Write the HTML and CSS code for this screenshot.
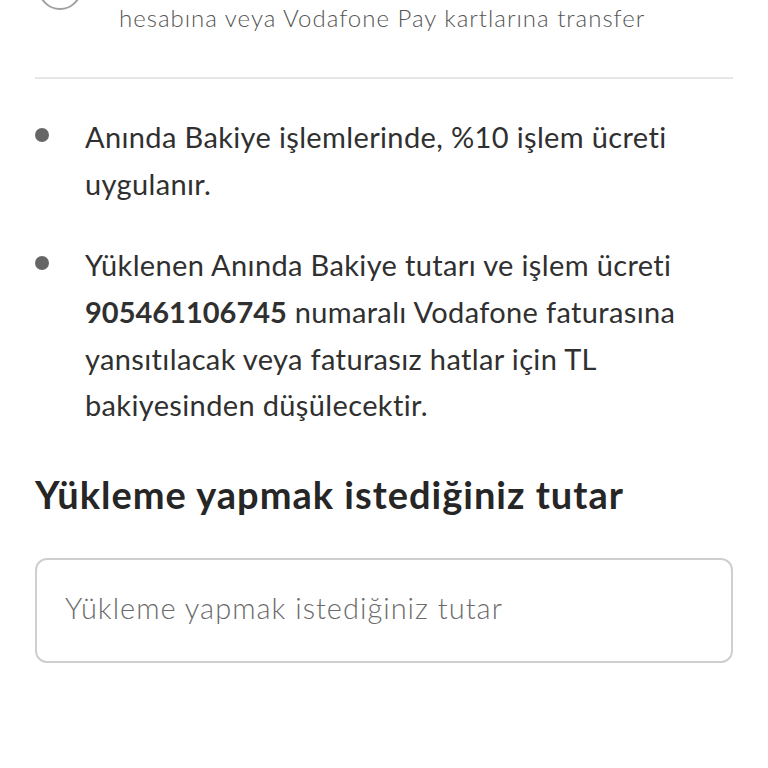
FILE: index.html
```html
<!DOCTYPE html>
<html lang="tr">
<head>
<meta charset="utf-8">
<link rel="stylesheet" href="styles.css">
</head>
<body>
<div class="page">
  <div class="option">
    <span class="radio"></span>
    <p class="option-line">hesabına veya Vodafone Pay kartlarına transfer</p>
  </div>
  <hr class="divider">
  <ul class="notes">
    <li class="note">Anında Bakiye işlemlerinde, %10 işlem ücreti uygulanır.</li>
    <li class="note">Yüklenen Anında Bakiye tutarı ve işlem ücreti <b class="num">905461106745</b> numaralı Vodafone faturasına yansıtılacak veya faturasız hatlar için TL bakiyesinden düşülecektir.</li>
  </ul>
  <h2 class="title">Yükleme yapmak istediğiniz tutar</h2>
  <div class="field">
    <input class="amount" type="text" placeholder="Yükleme yapmak istediğiniz tutar">
  </div>
</div>
</body>
</html>
```
FILE: styles.css
```css
html, body {
  margin: 0;
  padding: 0;
  background: #fff;
}
body {
  font-family: "Lato", "Open Sans", sans-serif;
  color: #303030;
  overflow: hidden;
  height: 768px;
}
.page {
  padding: 0 35px;
}
.option {
  display: flex;
  align-items: flex-start;
  gap: 37px;
}
.radio {
  flex: none;
  width: 44px;
  height: 44px;
  margin-left: 3px;
  margin-top: -34px;
  border: 2px solid #a0a0a0;
  border-radius: 50%;
  box-sizing: border-box;
}
.option-line {
  margin: 0;
  font-size: 24px;
  line-height: 36px;
  color: #555;
  font-weight: 300;
  letter-spacing: 1px;
}
.divider {
  border: 0;
  border-top: 2px solid #e6e6e6;
  margin: 41px 0 0 0;
}
.notes {
  list-style: none;
  margin: 35px 0 0 0;
  padding: 0;
}
.note {
  position: relative;
  padding-left: 50px;
  padding-right: 30px;
  font-size: 29px;
  line-height: 46.67px;
  letter-spacing: 0.36px;
  margin-bottom: 35px;
}
.note:last-child {
  margin-bottom: 0;
}
.note::before {
  content: "";
  position: absolute;
  left: 0;
  top: 13.5px;
  width: 14px;
  height: 14px;
  border-radius: 50%;
  background: #666;
}
.num {
  font-weight: 700;
  letter-spacing: 0;
}
.title {
  margin: 41px 0 0 0;
  font-size: 38px;
  line-height: 48px;
  font-weight: 700;
  color: #262626;
  letter-spacing: 1px;
}
.field {
  margin-top: 40px;
}
.amount {
  display: block;
  width: 100%;
  box-sizing: border-box;
  height: 105px;
  border: 2px solid #cfcfcf;
  border-radius: 12px;
  padding: 0 28px 7px;
  font-family: "Lato", "Open Sans", sans-serif;
  font-size: 29px;
  letter-spacing: 1px;
  color: #303030;
  outline: none;
  background: #fff;
}
.amount::placeholder {
  color: #6b6b6b;
  font-weight: 300;
}
```
